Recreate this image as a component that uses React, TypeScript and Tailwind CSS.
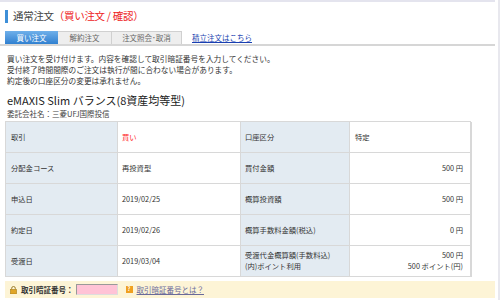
import React from "react";

const font = { fontFamily: '"Noto Sans CJK JP", "Liberation Sans", sans-serif' };

interface Row {
  l1: string;
  v1: React.ReactNode;
  l2: React.ReactNode;
  v2: React.ReactNode;
  right?: boolean;
}

const rows: Row[] = [
  { l1: "取引", v1: <span className="text-[#ff2a2a]">買い</span>, l2: "口座区分", v2: "特定" },
  { l1: "分配金コース", v1: "再投資型", l2: "買付金額", v2: "500 円", right: true },
  { l1: "申込日", v1: "2019/02/25", l2: "概算投資額", v2: "500 円", right: true },
  { l1: "約定日", v1: "2019/02/26", l2: "概算手数料金額(税込)", v2: "0 円", right: true },
  {
    l1: "受渡日",
    v1: "2019/03/04",
    l2: (
      <>
        <div>受渡代金概算額(手数料込)</div>
        <div>(内)ポイント利用</div>
      </>
    ),
    v2: (
      <>
        <div>500 円</div>
        <div>500 ポイント(円)</div>
      </>
    ),
    right: true,
  },
];

export default function App() {
  return (
    <div className="w-[500px] h-[300px] overflow-hidden bg-white text-[#333] border-r-2 border-[#e8e8ee]" style={font}>
      <div className="h-[2px] w-[495px] bg-[#e4e4ee]" />

      <div className="flex items-center h-[13px] mt-[8px] ml-[5px]">
        <div className="w-[3px] h-[13px] bg-[#3d8fd8]" />
        <div className="ml-[5px] text-[10.5px] leading-none tracking-[-0.3px]">
          <span className="text-[#444]">通常注文</span>
          <span className="text-[#ee1c1c]">（買い注文 / 確認）</span>
        </div>
      </div>

      <div className="flex items-end mt-[8px] pl-[5px] border-b-2 border-[#d6d6d6] w-[495px]">
        <div className="w-[53px] h-[13px] flex items-center justify-center text-[7.5px] text-white bg-gradient-to-b from-[#6fb0ea] to-[#2f80d0]">
          買い注文
        </div>
        <div className="w-[54px] h-[13px] flex items-center justify-center text-[7.5px] text-[#666] bg-[#eeeeee] border-t border-r border-[#d0d0d0]">
          解約注文
        </div>
        <div className="w-[70px] h-[13px] flex items-center justify-center text-[7.5px] text-[#666] bg-[#eeeeee] border-t border-r border-[#d0d0d0]">
          注文照会･取消
        </div>
        <a className="ml-[10px] h-[13px] flex items-center text-[7.5px] text-[#1a3fb0] underline">
          積立注文はこちら
        </a>
      </div>

      <div className="mt-[7px] ml-[7px] text-[7.7px] leading-[11px] text-[#333]">
        <div>買い注文を受け付けます。内容を確認して取引暗証番号を入力してください。</div>
        <div>受付終了時間間際のご注文は執行が間に合わない場合があります。</div>
        <div>約定後の口座区分の変更は承れません。</div>
      </div>

      <div className="mt-[8px] ml-[7px] text-[11px] leading-[13px] text-[#222]">
        eMAXIS Slim バランス(8資産均等型)
      </div>
      <div className="mt-[2px] ml-[7px] text-[7.5px] leading-[10px] text-[#444]">
        委託会社名：三菱UFJ国際投信
      </div>

      <div className="mt-[2px] ml-[5px] w-[466px] border-t border-l border-[#d8d8d8] text-[7.3px] text-[#333]">
        {rows.map((r, i) => (
          <div key={i} className="grid grid-cols-[112px_123px_109px_122px] h-[31px]">
            <div className="flex items-center pl-[5px] bg-[#e3ebf2] border-r border-b border-[#d8d8d8]">{r.l1}</div>
            <div className="flex items-center pl-[4px] bg-white border-r border-b border-[#d8d8d8]">{r.v1}</div>
            <div className="flex flex-col justify-center pl-[4px] bg-[#e3ebf2] border-r border-b border-[#d8d8d8] leading-[11px]">{r.l2}</div>
            <div
              className={
                r.right
                  ? "flex flex-col justify-center items-end pr-[7px] bg-white border-r-2 border-b border-[#d8d8d8] leading-[11px]"
                  : "flex flex-col justify-center items-start pl-[5px] bg-white border-r-2 border-b border-[#d8d8d8] leading-[11px]"
              }
            >
              {r.v2}
            </div>
          </div>
        ))}
      </div>

      <div className="mt-[4px] ml-[5px] w-[490px] h-[17px] bg-[#fdf4d6] flex items-center pl-[5px]">
        <svg width="7" height="8" viewBox="0 0 7 8" className="mr-[4px]">
          <path d="M1.7 3.5V2.3a1.8 1.8 0 0 1 3.6 0v1.2" fill="none" stroke="#9a7b2a" strokeWidth="1" />
          <rect x="0.5" y="3.5" width="6" height="4.5" fill="#e0a526" stroke="#a97a12" strokeWidth="0.6" />
        </svg>
        <span className="text-[7.5px] leading-[10px] font-bold text-[#333]">取引暗証番号：</span>
        <div className="ml-[2px] w-[42px] h-[11px] bg-[#ffc3d6] border border-[#999] border-r-[#ddd] border-b-[#ddd]" />
        <div className="ml-[8px] w-[7px] h-[7px] bg-[#f0a020] flex items-center justify-center text-[5.5px] font-bold text-white leading-none">
          ?
        </div>
        <a className="ml-[4px] text-[7.5px] leading-[10px] text-[#6a6a9a] underline">取引暗証番号とは？</a>
      </div>
    </div>
  );
}
